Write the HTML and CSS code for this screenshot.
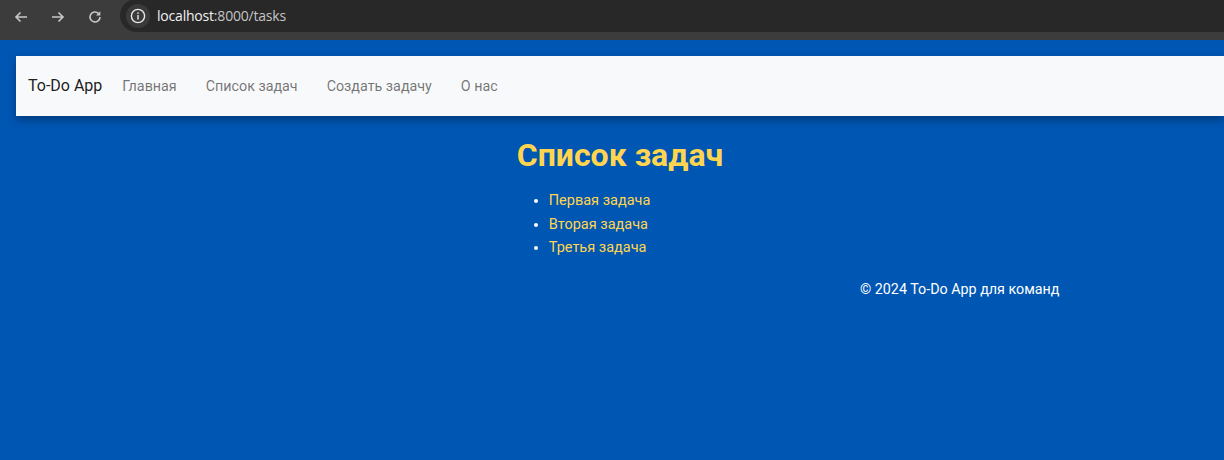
FILE: index.html
```html
<!DOCTYPE html>
<html lang="ru">
<head>
<meta charset="utf-8">
<title>To-Do App</title>
<link rel="stylesheet" href="styles.css">
</head>
<body>
<div class="chrome">
  <div class="chrome-btns">
    <svg class="cbtn" viewBox="0 0 16 16" width="16" height="16"><path d="M14 8H3M7.5 3.5L3 8l4.5 4.5" fill="none" stroke="#c8c8c8" stroke-width="1.6"/></svg>
    <svg class="cbtn" viewBox="0 0 16 16" width="16" height="16"><path d="M2 8h11M8.5 3.5L13 8l-4.5 4.5" fill="none" stroke="#c8c8c8" stroke-width="1.6"/></svg>
    <svg class="cbtn" viewBox="0 0 16 16" width="16" height="16"><path d="M13 8a5 5 0 1 1-1.6-3.7" fill="none" stroke="#c8c8c8" stroke-width="1.6"/><path d="M13.3 2.2v4.3H9z" fill="#c8c8c8"/></svg>
  </div>
  <div class="omnibox">
    <span class="info"><svg viewBox="0 0 16 16" width="16" height="16"><circle cx="8" cy="8" r="6.6" fill="none" stroke="#e8e8e8" stroke-width="1.4"/><rect x="7.3" y="7" width="1.4" height="4.6" fill="#e8e8e8"/><rect x="7.3" y="4.4" width="1.4" height="1.5" fill="#e8e8e8"/></svg></span>
    <span class="url"><span class="host">localhost</span><span class="path">:8000/tasks</span></span>
  </div>
</div>
<div class="page">
  <nav class="navbar">
    <a class="brand">To-Do App</a>
    <ul class="nav">
      <li><a>Главная</a></li>
      <li><a>Список задач</a></li>
      <li><a>Создать задачу</a></li>
      <li><a>О нас</a></li>
    </ul>
  </nav>
  <main class="content">
    <div class="tasks">
      <h1>Список задач</h1>
      <ul class="task-list">
        <li><a>Первая задача</a></li>
        <li><a>Вторая задача</a></li>
        <li><a>Третья задача</a></li>
      </ul>
    </div>
  </main>
  <footer class="footer">© 2024 To-Do App для команд</footer>
</div>
</body>
</html>
```
FILE: styles.css
```css
html, body {
  margin: 0;
  padding: 0;
  height: 100%;
}
body {
  background: #0056b3;
  font-family: Roboto, "Noto Sans", sans-serif;
  overflow: hidden;
}
.chrome {
  height: 40px;
  background: #3c3c3c;
  display: flex;
  align-items: flex-start;
}
.chrome-btns {
  display: flex;
  gap: 21px;
  padding: 9px 0 0 13px;
  width: 107px;
}
.cbtn {
  display: block;
}
.omnibox {
  flex: 1;
  height: 33px;
  background: #282828;
  border-top-left-radius: 17px;
  border-bottom-left-radius: 17px;
  margin-top: -1px;
  display: flex;
  align-items: center;
  padding-left: 6px;
}
.info {
  width: 24px;
  height: 24px;
  border-radius: 50%;
  background: #3a3a3a;
  display: flex;
  align-items: center;
  justify-content: center;
}
.info svg { display: block; }
.url {
  margin-left: 7px;
  font-family: "Segoe UI", "Open Sans", "Noto Sans", sans-serif;
  font-size: 14px;
  letter-spacing: -0.2px;
}
.host { color: #f0f0f0; }
.path { color: #c4c4c4; }
.page {
  padding: 16px 0 0 16px;
}
.navbar {
  background: #f8f9fa;
  height: 60px;
  display: flex;
  align-items: center;
  padding: 0 0 2px 12px;
  box-sizing: border-box;
  box-shadow: 0 4px 8px rgba(0, 0, 0, 0.3);
}
.brand {
  font-size: 16px;
  color: rgba(0, 0, 0, 0.9);
  margin-right: 20px;
}
.nav {
  list-style: none;
  display: flex;
  gap: 29px;
  margin: 0;
  padding: 0;
}
.nav a {
  font-size: 14.3px;
  color: rgba(0, 0, 0, 0.55);
}
.content {
  display: flex;
  justify-content: center;
}
.tasks {
  display: inline-block;
}
.tasks h1 {
  margin: 20px 0 0;
  font-size: 32px;
  font-weight: 700;
  line-height: 38px;
  color: #ffd54f;
}
.task-list {
  margin: 15px 0 0;
  padding-left: 32px;
  color: #fff;
}
.task-list li {
  font-size: 14.5px;
  line-height: 23.5px;
  font-weight: 400;
}
.task-list a {
  color: #ffd54f;
}
.footer {
  margin: 21px 0 0 844px;
  color: #fff;
  font-size: 14.3px;
  font-weight: 400;
}
```
